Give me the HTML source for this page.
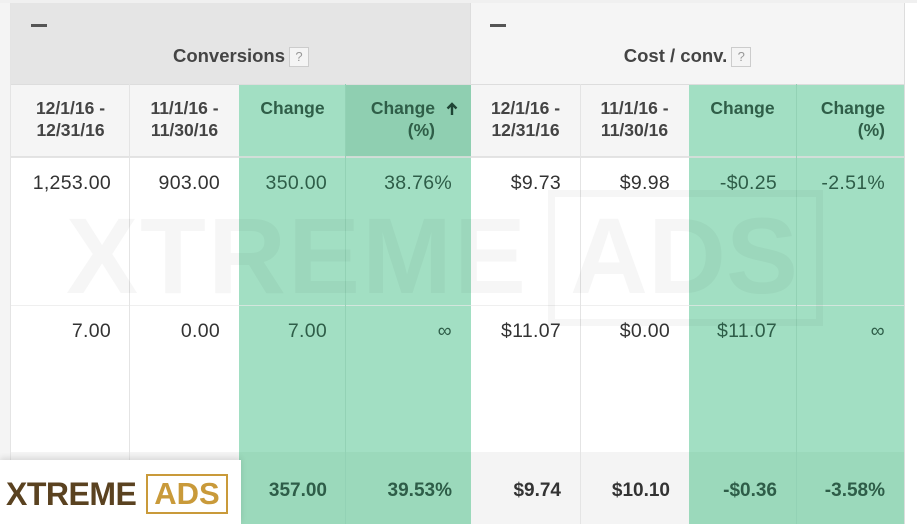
<!DOCTYPE html>
<html><head><meta charset="utf-8"><style>
*{margin:0;padding:0;box-sizing:border-box}
body{width:917px;height:524px;overflow:hidden;background:#fff;font-family:"Liberation Sans",Arial,sans-serif;position:relative}
.a{position:absolute}
.c{position:absolute;text-align:right;padding-right:19px;font-size:19.5px;color:#333;letter-spacing:.3px}
.t{font-weight:bold;font-size:19px;letter-spacing:0}
.g{color:#2e5d48}
.h{position:absolute;font-weight:bold;font-size:17.5px;color:#444;text-align:center;line-height:22px}
.hg{color:#2f5e48}
.q{display:inline-block;width:20px;height:20px;border:1px solid #ccc;background:#f4f4f4;color:#999;font-size:13px;line-height:18px;text-align:center;font-weight:normal;vertical-align:1px;margin-left:4px}
.dash{position:absolute;width:16px;height:3px;background:#555}
.vl{position:absolute;width:1px;background:#e4e4e4}
</style></head><body>
<div class="a" style="left:0;top:0;width:11px;height:524px;background:#f4f4f4"></div>
<div class="a" style="left:0;top:0;width:917px;height:3px;background:#f0f0f0"></div>
<div class="a" style="left:11px;top:3px;width:460px;height:81px;background:#e5e5e5"></div>
<div class="a" style="left:471px;top:3px;width:433px;height:81px;background:#f5f5f5"></div>
<div class="a" style="left:11px;top:84px;width:228px;height:73px;background:#f5f5f5"></div>
<div class="a" style="left:471px;top:84px;width:218px;height:73px;background:#f5f5f5"></div>
<div class="a" style="left:11px;top:452px;width:228px;height:72px;background:#f4f4f4"></div>
<div class="a" style="left:471px;top:452px;width:218px;height:72px;background:#f4f4f4"></div>
<div class="a" style="left:239px;top:84px;width:232px;height:440px;background:#a2dfc3"></div>
<div class="a" style="left:346px;top:84px;width:125px;height:73px;background:#8fcfb1"></div>
<div class="a" style="left:689px;top:84px;width:215px;height:440px;background:#a2dfc3"></div>
<div class="a" style="left:239px;top:452px;width:232px;height:72px;background:#9bd9bb"></div>
<div class="a" style="left:689px;top:452px;width:215px;height:72px;background:#9bd9bb"></div>
<div class="a" style="left:11px;top:84px;width:893px;height:1px;background:#ddd"></div>
<div class="a" style="left:11px;top:156px;width:893px;height:2px;background:#ddd;opacity:.8"></div>
<div class="a" style="left:11px;top:305px;width:893px;height:1px;background:#e8e8e8;opacity:.7"></div>
<div class="vl" style="left:10px;top:3px;height:521px"></div>
<div class="vl" style="left:129px;top:84px;height:440px"></div>
<div class="vl" style="left:345px;top:84px;height:440px;background:#93d2b5"></div>
<div class="vl" style="left:470px;top:3px;height:81px;background:#ddd"></div>
<div class="vl" style="left:580px;top:84px;height:440px"></div>
<div class="vl" style="left:796px;top:84px;height:440px;background:#93d2b5"></div>
<div class="vl" style="left:904px;top:3px;height:521px;background:#ddd"></div>
<div class="a" style="left:66px;top:196px;font-size:108px;font-weight:bold;color:rgba(0,0,0,0.035);letter-spacing:2px;line-height:120px">XTREME</div>
<div class="a" style="left:548px;top:190px;width:275px;height:136px;border:7px solid rgba(0,0,0,0.035)"></div>
<div class="a" style="left:570px;top:196px;font-size:108px;font-weight:bold;color:rgba(0,0,0,0.035);line-height:120px">ADS</div>
<div class="dash" style="left:31px;top:24px"></div>
<div class="dash" style="left:490px;top:24px"></div>
<div class="h" style="left:11px;top:45px;width:460px;font-size:18.5px">Conversions<span class="q">?</span></div>
<div class="h" style="left:471px;top:45px;width:433px;font-size:18.5px">Cost / conv.<span class="q">?</span></div>
<div class="h" style="left:11px;top:97px;width:119px">12/1/16 -<br>12/31/16</div>
<div class="h" style="left:130px;top:97px;width:109px">11/1/16 -<br>11/30/16</div>
<div class="h hg" style="left:239px;top:97px;width:107px">Change</div>
<div class="h hg" style="left:346px;top:97px;width:125px;text-align:right;padding-right:36px">Change<br>(%)</div>
<svg class="a" style="left:446px;top:102px" width="12" height="14" viewBox="0 0 12 14"><path d="M6 13V2M1.5 6.5L6 2l4.5 4.5" fill="none" stroke="#1f4535" stroke-width="2.4"/></svg>
<div class="h" style="left:471px;top:97px;width:109px">12/1/16 -<br>12/31/16</div>
<div class="h" style="left:580px;top:97px;width:109px">11/1/16 -<br>11/30/16</div>
<div class="h hg" style="left:689px;top:97px;width:107px">Change</div>
<div class="h hg" style="left:796px;top:97px;width:108px;text-align:right;padding-right:19px">Change<br>(%)</div>
<div class="c" style="left:11px;top:172px;width:119px">1,253.00</div>
<div class="c" style="left:130px;top:172px;width:109px">903.00</div>
<div class="c g" style="left:239px;top:172px;width:107px">350.00</div>
<div class="c g" style="left:346px;top:172px;width:125px">38.76%</div>
<div class="c" style="left:471px;top:172px;width:109px">$9.73</div>
<div class="c" style="left:580px;top:172px;width:109px">$9.98</div>
<div class="c g" style="left:689px;top:172px;width:107px">-$0.25</div>
<div class="c g" style="left:796px;top:172px;width:108px">-2.51%</div>
<div class="c" style="left:11px;top:320px;width:119px">7.00</div>
<div class="c" style="left:130px;top:320px;width:109px">0.00</div>
<div class="c g" style="left:239px;top:320px;width:107px">7.00</div>
<div class="c g" style="left:346px;top:320px;width:125px">∞</div>
<div class="c" style="left:471px;top:320px;width:109px">$11.07</div>
<div class="c" style="left:580px;top:320px;width:109px">$0.00</div>
<div class="c g" style="left:689px;top:320px;width:107px">$11.07</div>
<div class="c g" style="left:796px;top:320px;width:108px">∞</div>
<div class="c g t" style="left:239px;top:480px;width:107px">357.00</div>
<div class="c g t" style="left:346px;top:480px;width:125px">39.53%</div>
<div class="c t" style="left:471px;top:480px;width:109px">$9.74</div>
<div class="c t" style="left:580px;top:480px;width:109px">$10.10</div>
<div class="c g t" style="left:689px;top:480px;width:107px">-$0.36</div>
<div class="c g t" style="left:796px;top:480px;width:108px">-3.58%</div>
<div class="a" style="left:0;top:460px;width:241px;height:64px;background:#fff;box-shadow:0 -2px 6px rgba(0,0,0,0.12)"></div>
<div class="a" style="left:6px;top:476px;font-size:32px;font-weight:bold;color:#5a4220;letter-spacing:-0.5px;line-height:36px">XTREME</div>
<div class="a" style="left:146px;top:474px;width:82px;height:40px;border:2px solid #c99a3a;color:#c99a3a;font-size:31px;font-weight:bold;line-height:36px;text-align:center">ADS</div>
</body></html>
